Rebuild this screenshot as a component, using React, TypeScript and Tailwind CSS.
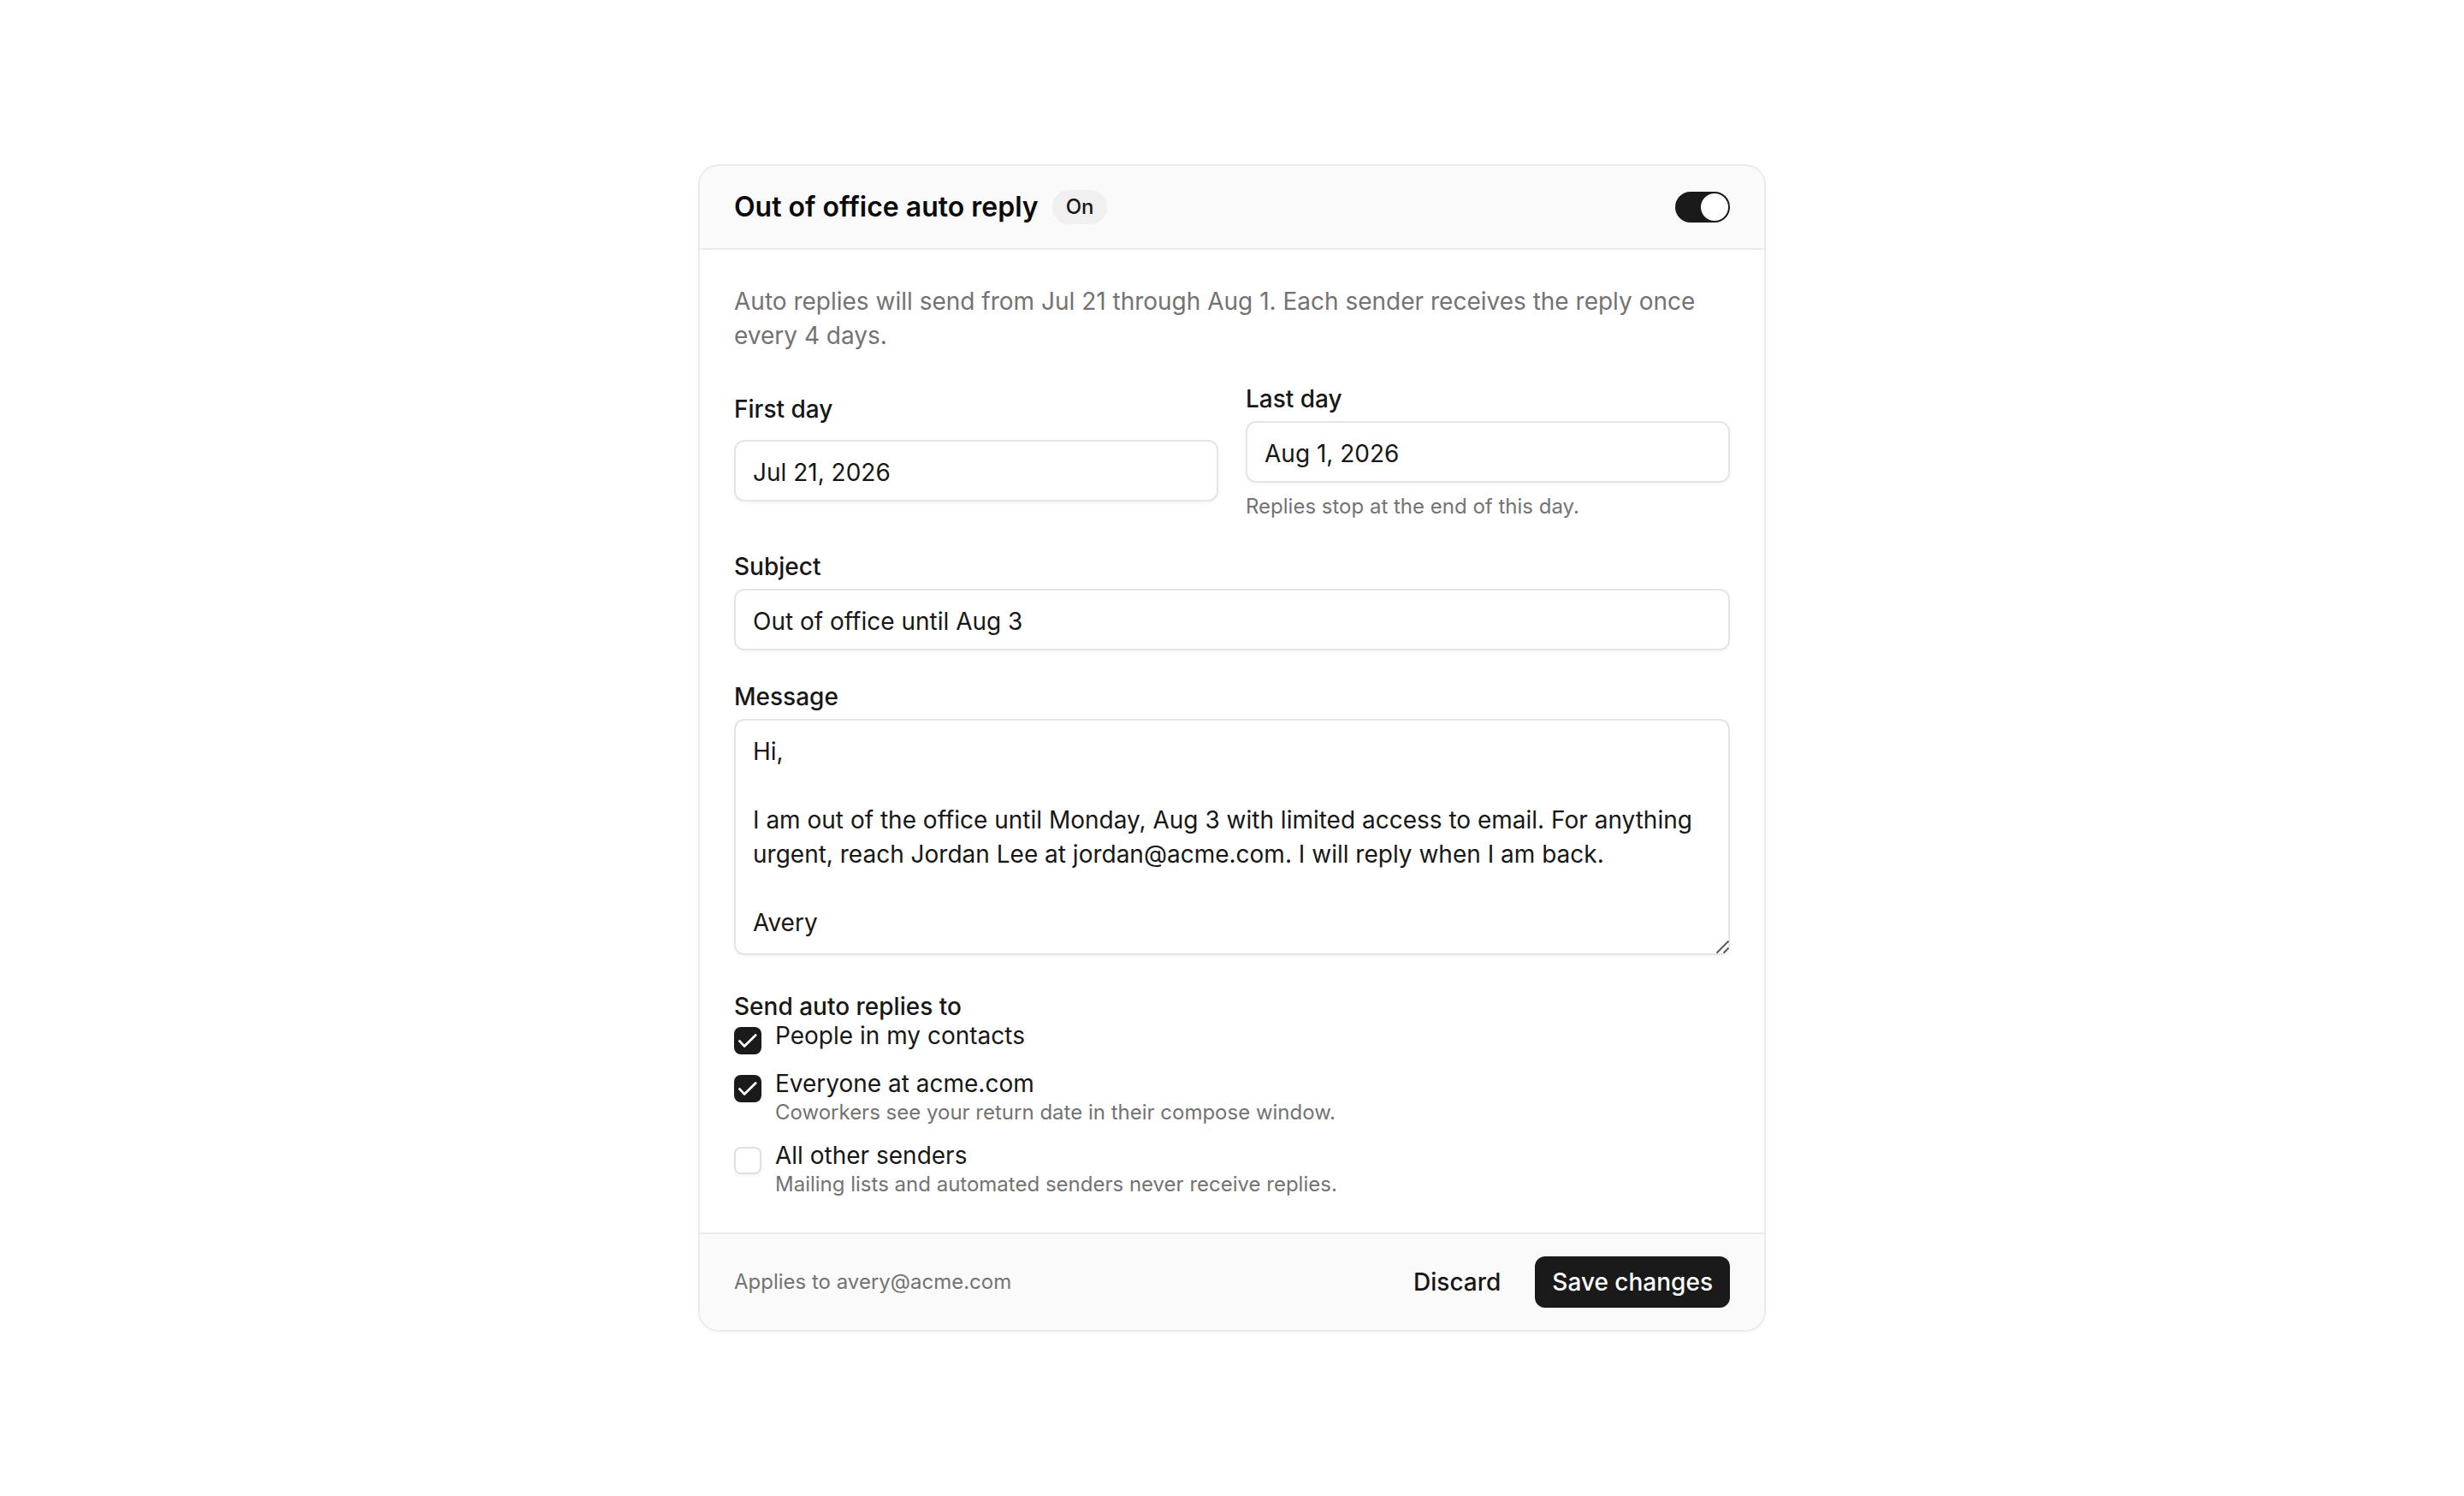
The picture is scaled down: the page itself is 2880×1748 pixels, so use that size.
import React from "react";

const MESSAGE =
  "Hi,\n\nI am out of the office until Monday, Aug 3 with limited access to email. For anything urgent, reach Jordan Lee at jordan@acme.com. I will reply when I am back.\n\nAvery";

function CheckBox({ checked }: { checked?: boolean }) {
  if (checked) {
    return (
      <span className="mt-[10px] flex h-8 w-8 shrink-0 items-center justify-center rounded-[8px] bg-[#1a1a1a]">
        <svg viewBox="0 0 16 16" className="h-8 w-8" fill="none" stroke="white" strokeWidth="1.4" strokeLinecap="round" strokeLinejoin="round">
          <path d="M3.2 8.2 L6 11.2 L12.6 4.8" />
        </svg>
      </span>
    );
  }
  return (
    <span className="mt-[10px] block h-8 w-8 shrink-0 rounded-[8px] border-2 border-[#e0e0e0] bg-white shadow-[0_2px_4px_rgba(0,0,0,0.05)]" />
  );
}

function Option({ checked, label, hint }: { checked?: boolean; label: string; hint?: string }) {
  return (
    <label className="flex items-start gap-4">
      <CheckBox checked={checked} />
      <div className="flex flex-col">
        <span className="text-[28px] leading-[40px] text-[#171717]">{label}</span>
        {hint && <span className="-mt-0.5 text-[24px] leading-[32px] text-[#737373]">{hint}</span>}
      </div>
    </label>
  );
}

const inputCls =
  "block h-[72px] w-full rounded-xl border-2 border-[#e5e5e5] bg-white px-5 pt-1 text-[28px] text-[#171717] shadow-[0_2px_4px_rgba(0,0,0,0.04)] outline-none";

export default function App() {
  return (
    <div className="flex min-h-screen w-full items-center justify-center bg-white font-['Inter',sans-serif] text-[#171717] antialiased">
      <div className="w-[1248px] overflow-hidden rounded-[24px] border-2 border-[#ebebeb] bg-white shadow-[0_2px_4px_rgba(0,0,0,0.03)]">
        <div className="flex items-center justify-between border-b-2 border-[#ebebeb] bg-[#fafafa] px-10 py-6">
          <div className="flex items-center gap-4">
            <h2 className="text-[32px] font-semibold leading-[48px] text-[#0a0a0a]">Out of office auto reply</h2>
            <span className="rounded-full bg-[#f0f0f0] px-4 text-[24px] font-medium leading-[40px] text-[#171717]">On</span>
          </div>
          <button className="flex h-[36px] w-16 items-center justify-end rounded-full bg-[#1a1a1a] p-[2px]">
            <span className="block h-8 w-8 rounded-full bg-white" />
          </button>
        </div>

        <div className="flex flex-col px-10 pb-10 pt-10">
          <p className="text-[28px] leading-[40px] text-[#737373]">
            Auto replies will send from Jul 21 through Aug 1. Each sender receives the reply once every 4 days.
          </p>

          <div className="mt-[34px] grid grid-cols-2 items-start gap-8">
            <div className="mt-[12px] flex flex-col gap-4">
              <label className="text-[28px] font-medium leading-[40px]">First day</label>
              <input className={inputCls} defaultValue="Jul 21, 2026" />
            </div>
            <div className="flex flex-col">
              <label className="text-[28px] font-medium leading-[40px]">Last day</label>
              <input className={"mt-[6px] " + inputCls} defaultValue="Aug 1, 2026" />
              <p className="mt-[12px] text-[24px] leading-[32px] text-[#737373]">Replies stop at the end of this day.</p>
            </div>
          </div>

          <div className="mt-[34px] flex flex-col">
            <label className="text-[28px] font-medium leading-[40px]">Subject</label>
            <input className={"mt-[6px] " + inputCls} defaultValue="Out of office until Aug 3" />
          </div>

          <div className="mt-[34px] flex flex-col">
            <label className="text-[28px] font-medium leading-[40px]">Message</label>
            <div className="relative mt-[6px]">
              <textarea
                className="block h-[276px] w-full resize-none rounded-xl border-2 border-[#e5e5e5] bg-white px-5 py-4 text-[28px] leading-[40px] text-[#171717] shadow-[0_2px_4px_rgba(0,0,0,0.04)] outline-none"
                defaultValue={MESSAGE}
              />
              <svg
                viewBox="0 0 18 18"
                className="pointer-events-none absolute bottom-0 right-0 h-[18px] w-[18px]"
                fill="none"
                stroke="#5a5a5a"
                strokeWidth="2"
                strokeLinecap="butt"
              >
                <path d="M2.5 15.5 L16.5 1.5" />
                <path d="M10.5 15.5 L16.5 9.5" />
              </svg>
            </div>
          </div>

          <div className="mt-10 flex flex-col">
            <div className="text-[28px] font-medium leading-[40px]">Send auto replies to</div>
            <div className="-mt-[6px] flex flex-col gap-[14px]">
              <Option checked label="People in my contacts" />
              <Option checked label="Everyone at acme.com" hint="Coworkers see your return date in their compose window." />
              <Option label="All other senders" hint="Mailing lists and automated senders never receive replies." />
            </div>
          </div>
        </div>

        <div className="flex items-center justify-between border-t-2 border-[#ebebeb] bg-[#fafafa] px-10 py-[26px]">
          <span className="text-[24px] leading-[32px] text-[#737373]">Applies to avery@acme.com</span>
          <div className="flex items-center gap-4">
            <button className="h-[60px] px-6 text-[28px] font-medium text-[#171717]">Discard</button>
            <button className="h-[60px] rounded-xl bg-[#1a1a1a] px-5 text-[28px] font-medium text-white">Save changes</button>
          </div>
        </div>
      </div>
    </div>
  );
}
